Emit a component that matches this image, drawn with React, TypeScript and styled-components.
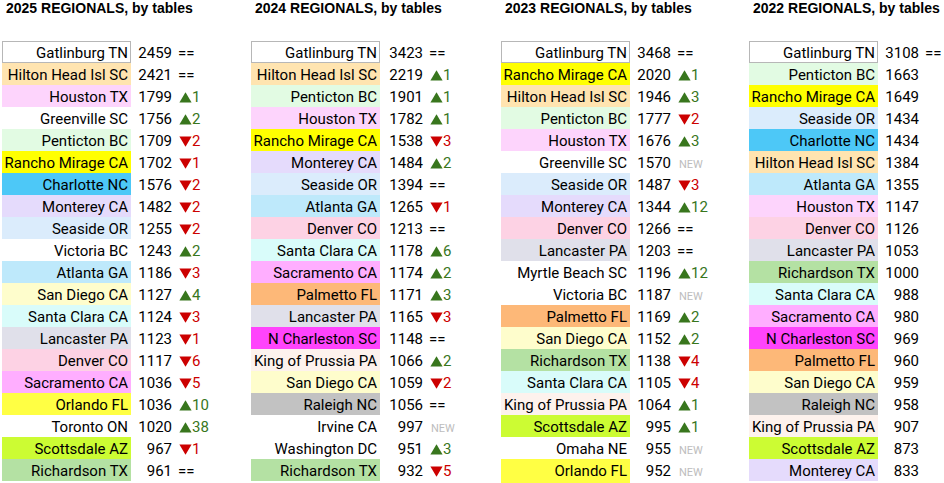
import React from 'react'
import styled, { createGlobalStyle } from 'styled-components'

const GlobalStyle = createGlobalStyle`
  html, body {
    margin: 0;
    padding: 0;
    background: #ffffff;
  }
  body {
    font-family: Roboto, 'Liberation Sans', Arial, sans-serif;
    color: #000000;
  }
`

const colors: Record<string, string> = {
  none: 'transparent',
  hilton: '#ffe4b0',
  houston: '#fdd4fc',
  penticton: '#e2fbe3',
  rancho: '#ffff00',
  charlotte: '#4dc8f7',
  monterey: '#e5dbfc',
  seaside: '#dbecfc',
  atlanta: '#bee9fb',
  sandiego: '#fefdcc',
  santaclara: '#d9fcfa',
  lancaster: '#e0e0ea',
  denver: '#fdd2e4',
  sacramento: '#ffaeff',
  orlando: '#ffff44',
  scottsdale: '#ccfc33',
  richardson: '#b4e1a3',
  palmetto: '#fdb878',
  ncharleston: '#ff44fc',
  kop: '#fdf2ed',
  raleigh: '#c2c2c2',
}

// city -> colour key, the same city keeps its colour in every year
const cityColor: Record<string, string> = {
  'Hilton Head Isl SC': 'hilton',
  'Houston TX': 'houston',
  'Penticton BC': 'penticton',
  'Rancho Mirage CA': 'rancho',
  'Charlotte NC': 'charlotte',
  'Monterey CA': 'monterey',
  'Seaside OR': 'seaside',
  'Atlanta GA': 'atlanta',
  'San Diego CA': 'sandiego',
  'Santa Clara CA': 'santaclara',
  'Lancaster PA': 'lancaster',
  'Denver CO': 'denver',
  'Sacramento CA': 'sacramento',
  'Orlando FL': 'orlando',
  'Scottsdale AZ': 'scottsdale',
  'Richardson TX': 'richardson',
  'Palmetto FL': 'palmetto',
  'N Charleston SC': 'ncharleston',
  'King of Prussia PA': 'kop',
  'Raleigh NC': 'raleigh',
}

// change: '=' same place, 'u3' up 3, 'd2' down 2, 'n' new, '' nothing
type Entry = [string, number, string]

const years: { title: string; numWidth: number; restWidth: number; rows: Entry[] }[] = [
  {
    title: '2025 REGIONALS, by tables',
    numWidth: 44,
    restWidth: 76,
    rows: [
      ['Gatlinburg TN', 2459, '='],
      ['Hilton Head Isl SC', 2421, '='],
      ['Houston TX', 1799, 'u1'],
      ['Greenville SC', 1756, 'u2'],
      ['Penticton BC', 1709, 'd2'],
      ['Rancho Mirage CA', 1702, 'd1'],
      ['Charlotte NC', 1576, 'd2'],
      ['Monterey CA', 1482, 'd2'],
      ['Seaside OR', 1255, 'd2'],
      ['Victoria BC', 1243, 'u2'],
      ['Atlanta GA', 1186, 'd3'],
      ['San Diego CA', 1127, 'u4'],
      ['Santa Clara CA', 1124, 'd3'],
      ['Lancaster PA', 1123, 'd1'],
      ['Denver CO', 1117, 'd6'],
      ['Sacramento CA', 1036, 'd5'],
      ['Orlando FL', 1036, 'u10'],
      ['Toronto ON', 1020, 'u38'],
      ['Scottsdale AZ', 967, 'd1'],
      ['Richardson TX', 961, '='],
    ],
  },
  {
    title: '2024 REGIONALS, by tables',
    numWidth: 46,
    restWidth: 75,
    rows: [
      ['Gatlinburg TN', 3423, '='],
      ['Hilton Head Isl SC', 2219, 'u1'],
      ['Penticton BC', 1901, 'u1'],
      ['Houston TX', 1782, 'u1'],
      ['Rancho Mirage CA', 1538, 'd3'],
      ['Monterey CA', 1484, 'u2'],
      ['Seaside OR', 1394, '='],
      ['Atlanta GA', 1265, 'd1'],
      ['Denver CO', 1213, '='],
      ['Santa Clara CA', 1178, 'u6'],
      ['Sacramento CA', 1174, 'u2'],
      ['Palmetto FL', 1171, 'u3'],
      ['Lancaster PA', 1165, 'd3'],
      ['N Charleston SC', 1148, '='],
      ['King of Prussia PA', 1066, 'u2'],
      ['San Diego CA', 1059, 'd2'],
      ['Raleigh NC', 1056, '='],
      ['Irvine CA', 997, 'n'],
      ['Washington DC', 951, 'u3'],
      ['Richardson TX', 932, 'd5'],
    ],
  },
  {
    title: '2023 REGIONALS, by tables',
    numWidth: 44,
    restWidth: 75,
    rows: [
      ['Gatlinburg TN', 3468, '='],
      ['Rancho Mirage CA', 2020, 'u1'],
      ['Hilton Head Isl SC', 1946, 'u3'],
      ['Penticton BC', 1777, 'd2'],
      ['Houston TX', 1676, 'u3'],
      ['Greenville SC', 1570, 'n'],
      ['Seaside OR', 1487, 'd3'],
      ['Monterey CA', 1344, 'u12'],
      ['Denver CO', 1266, '='],
      ['Lancaster PA', 1203, '='],
      ['Myrtle Beach SC', 1196, 'u12'],
      ['Victoria BC', 1187, 'n'],
      ['Palmetto FL', 1169, 'u2'],
      ['San Diego CA', 1152, 'u2'],
      ['Richardson TX', 1138, 'd4'],
      ['Santa Clara CA', 1105, 'd4'],
      ['King of Prussia PA', 1064, 'u1'],
      ['Scottsdale AZ', 995, 'u1'],
      ['Omaha NE', 955, 'n'],
      ['Orlando FL', 952, 'n'],
    ],
  },
  {
    title: '2022 REGIONALS, by tables',
    numWidth: 44,
    restWidth: 66,
    rows: [
      ['Gatlinburg TN', 3108, '='],
      ['Penticton BC', 1663, ''],
      ['Rancho Mirage CA', 1649, ''],
      ['Seaside OR', 1434, ''],
      ['Charlotte NC', 1434, ''],
      ['Hilton Head Isl SC', 1384, ''],
      ['Atlanta GA', 1355, ''],
      ['Houston TX', 1147, ''],
      ['Denver CO', 1126, ''],
      ['Lancaster PA', 1053, ''],
      ['Richardson TX', 1000, ''],
      ['Santa Clara CA', 988, ''],
      ['Sacramento CA', 980, ''],
      ['N Charleston SC', 969, ''],
      ['Palmetto FL', 960, ''],
      ['San Diego CA', 959, ''],
      ['Raleigh NC', 958, ''],
      ['King of Prussia PA', 907, ''],
      ['Scottsdale AZ', 873, ''],
      ['Monterey CA', 833, ''],
    ],
  },
]

const Triangle: React.FC<{ dir: 'up' | 'down'; color: string }> = ({ dir, color }) => (
  <TriangleSvg width="13" height="11" viewBox="0 0 13 11">
    {dir === 'up' ? (
      <polygon points="0.4,10.6 6.5,0.2 12.6,10.6" fill={color} />
    ) : (
      <polygon points="0.4,0.4 12.6,0.4 6.5,10.8" fill={color} />
    )}
  </TriangleSvg>
)

const Change: React.FC<{ code: string }> = ({ code }) => {
  if (code === '=') return <Same>==</Same>
  if (code === 'n') return <NewTag>NEW</NewTag>
  if (!code) return null
  const up = code[0] === 'u'
  return (
    <Move $up={up}>
      <Triangle dir={up ? 'up' : 'down'} color={up ? '#38761d' : '#cc0000'} />
      {code.slice(1)}
    </Move>
  )
}

const App: React.FC = () => (
  <>
    <GlobalStyle />
    <Page>
      {years.map((year) => (
        <YearTable key={year.title}>
          <Title>{year.title}</Title>
          {year.rows.map(([city, tables, change], index) => (
            <Row key={city} $num={year.numWidth} $rest={year.restWidth}>
              <City $bg={colors[cityColor[city] || 'none']} $boxed={index === 0}>
                {city}
              </City>
              <Tables>{tables}</Tables>
              <ChangeCell>
                <Change code={change} />
              </ChangeCell>
            </Row>
          ))}
        </YearTable>
      ))}
    </Page>
  </>
)

const Page = styled.div`
  display: flex;
  flex-direction: row;
  padding-left: 2px;
  width: 944px;
  height: 483px;
  box-sizing: border-box;
  overflow: hidden;
`

const YearTable = styled.div`
  display: flex;
  flex-direction: column;
  flex-shrink: 0;
`

const Title = styled.div`
  font-family: 'Liberation Sans', Arial, sans-serif;
  font-weight: 700;
  font-size: 14px;
  line-height: 17px;
  height: 17px;
  padding-left: 4px;
  margin-bottom: 24px;
  white-space: nowrap;
`

const Row = styled.div<{ $num: number; $rest: number }>`
  display: grid;
  grid-template-columns: 129px ${({ $num }) => $num}px ${({ $rest }) => $rest}px;
  height: 22px;
  font-size: 15px;
  line-height: 20px;
`

const City = styled.div<{ $bg: string; $boxed: boolean }>`
  background: ${({ $bg }) => $bg};
  border: ${({ $boxed }) => ($boxed ? '1px solid #b7b7b7' : 'none')};
  box-sizing: border-box;
  text-align: right;
  padding-top: ${({ $boxed }) => ($boxed ? '1px' : '2px')};
  padding-right: ${({ $boxed }) => ($boxed ? '2px' : '3px')};
  white-space: nowrap;
  overflow: hidden;
`

const Tables = styled.div`
  text-align: right;
  padding-top: 2px;
  padding-right: 3px;
`

const ChangeCell = styled.div`
  padding-top: 2px;
  padding-left: 3px;
  white-space: nowrap;
`

const Same = styled.span`
  color: #000000;
`

const Move = styled.span<{ $up: boolean }>`
  color: ${({ $up }) => ($up ? '#38761d' : '#cc0000')};
`

const TriangleSvg = styled.svg`
  display: inline-block;
  vertical-align: -1px;
  margin-left: 1px;
`

const NewTag = styled.span`
  font-size: 11px;
  color: #bdbdbd;
  padding-left: 2px;
`

export default App
